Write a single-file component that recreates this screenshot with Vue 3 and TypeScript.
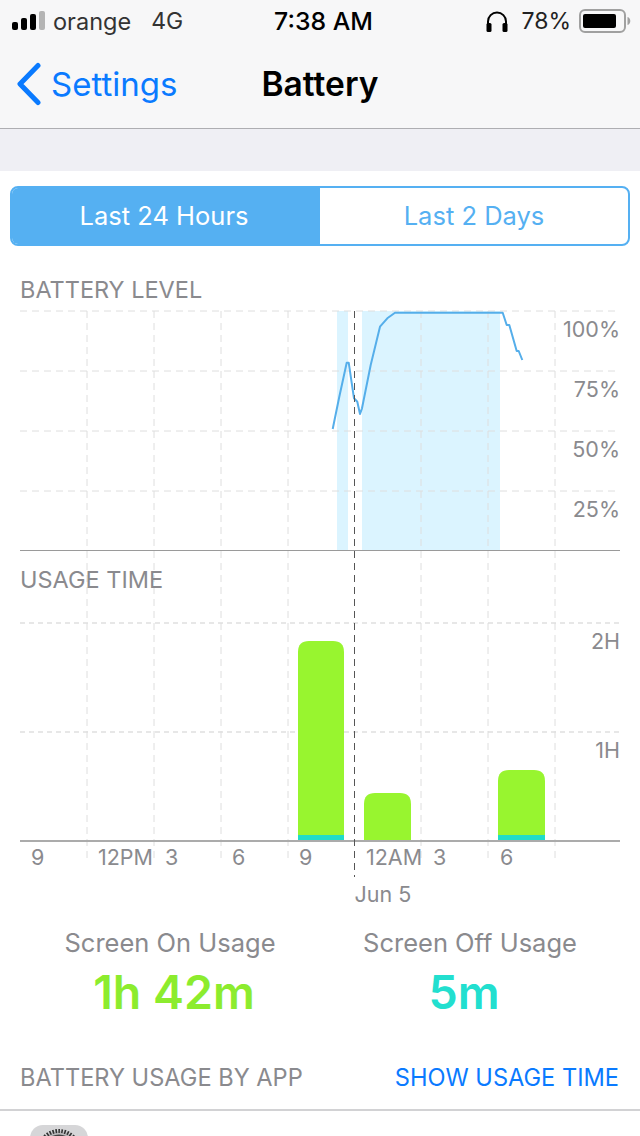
<script setup lang="ts">
const hLines = [311, 371, 431, 491]
const hLinesUsage = [623, 732]
const vLines = [87, 154, 221, 288, 421, 488, 555]

const levelLabels = [
  { text: '100%', y: 337 },
  { text: '75%', y: 397 },
  { text: '50%', y: 457 },
  { text: '25%', y: 517 },
]

const hourLabels = [
  { text: '2H', y: 649 },
  { text: '1H', y: 758 },
]

const xLabels = [
  { text: '9', x: 31 },
  { text: '12PM', x: 98 },
  { text: '3', x: 165 },
  { text: '6', x: 232 },
  { text: '9', x: 299 },
  { text: '12AM', x: 366 },
  { text: '3', x: 433 },
  { text: '6', x: 500 },
]

const charging = [
  { x: 337, width: 11 },
  { x: 362, width: 138 },
]

const levelLine =
  '332.7,429 339.3,396.7 346.7,362.7 348.7,362.7 354,398.3 357.3,401.7 360,414 362,408.3 370.7,365 380,326.7 387.3,318.3 395,312.7 502.7,312.7 506.7,325 509.3,325 516.7,351 518.7,351 522.3,360'

const bars = [
  { x: 298, width: 46, top: 641, teal: 835 },
  { x: 364, width: 47, top: 793, teal: 0 },
  { x: 498, width: 47, top: 770, teal: 835 },
]

function barPath(x: number, w: number, top: number) {
  const r = 11
  return `M${x} 841V${top + r}Q${x} ${top} ${x + r} ${top}H${x + w - r}Q${x + w} ${top} ${x + w} ${top + r}V841Z`
}
</script>

<template>
  <div class="screen">
    <header class="top">
      <div class="status">
        <div class="status-left">
          <svg width="33" height="20" viewBox="0 0 33 20">
            <rect x="0" y="11" width="6" height="8" rx="2" fill="#000" />
            <rect x="9" y="7" width="6" height="12" rx="2" fill="#000" />
            <rect x="18" y="3" width="6" height="16" rx="2" fill="#000" />
            <rect x="27" y="0" width="6" height="19" rx="2" fill="#b4b4b4" />
          </svg>
          <span class="carrier">orange</span>
          <span class="network">4G</span>
        </div>
        <span class="clock">7:38 AM</span>
        <div class="status-right">
          <svg class="phones" width="22" height="21" viewBox="0 0 22 21" fill="none">
            <path d="M2 14V10.500a9 9 0 0 1 18 0V14" stroke="#000" stroke-width="2" />
            <rect x="0.500" y="12" width="5" height="9" rx="1.500" fill="#000" />
            <rect x="16.500" y="12" width="5" height="9" rx="1.500" fill="#000" />
          </svg>
          <span class="percent">78%</span>
          <svg width="53" height="24" viewBox="0 0 53 24">
            <rect x="1" y="1" width="45" height="22" rx="5" fill="none" stroke="#a0a0a0" stroke-width="2" />
            <rect x="4" y="5" width="33" height="14" rx="2" fill="#000" />
            <path d="M48.500 8c1.800.5 2.800 2.100 2.800 4s-1 3.500-2.800 4z" fill="#a0a0a0" />
          </svg>
        </div>
      </div>
      <nav class="nav">
        <div class="back">
          <svg width="26" height="44" viewBox="0 0 26 44" fill="none">
            <path d="M22 3.500 4 22l18 18.500" stroke="#0a7aff" stroke-width="5" stroke-linecap="round" stroke-linejoin="round" />
          </svg>
          <span>Settings</span>
        </div>
        <h1 class="title">Battery</h1>
      </nav>
    </header>

    <div class="band"></div>

    <main class="content">
      <div class="segment">
        <div class="seg active">Last 24 Hours</div>
        <div class="seg">Last 2 Days</div>
      </div>

      <svg class="chart" width="640" height="640" viewBox="0 270 640 640">
        <rect v-for="c in charging" :key="c.x" :x="c.x" y="311" :width="c.width" height="239" fill="#dbf4ff" />

        <line v-for="y in hLines" :key="y" x1="20" x2="620" :y1="y" :y2="y" class="grid" />
        <line v-for="y in hLinesUsage" :key="y" x1="20" x2="620" :y1="y" :y2="y" class="grid usage-grid" />
        <line v-for="x in vLines" :key="x" :x1="x" :x2="x" y1="311" y2="858" class="grid" />

        <polyline :points="levelLine" fill="none" stroke="#55aeea" stroke-width="2" stroke-linejoin="round" />

        <g v-for="b in bars" :key="b.x">
          <path :d="barPath(b.x, b.width, b.top)" fill="#98f52f" />
          <rect v-if="b.teal" :x="b.x" :y="b.teal" :width="b.width" :height="841 - b.teal" fill="#1fdcc8" />
        </g>

        <line x1="20" x2="620" y1="550.500" y2="550.500" class="axis" />
        <line x1="20" x2="620" y1="841" y2="841" class="axis thick" />
        <line x1="354.500" x2="354.500" y1="311" y2="877" class="now" />

        <text x="20" y="298" class="label heading">BATTERY LEVEL</text>
        <text x="20" y="588" class="label heading">USAGE TIME</text>
        <text v-for="l in levelLabels" :key="l.text" x="620" :y="l.y" text-anchor="end" class="label">{{ l.text }}</text>
        <text v-for="l in hourLabels" :key="l.text" x="620" :y="l.y" text-anchor="end" class="label">{{ l.text }}</text>
        <text v-for="l in xLabels" :key="l.text + l.x" :x="l.x" y="865" class="label">{{ l.text }}</text>
        <text x="354.500" y="902" class="label">Jun 5</text>
      </svg>

      <section class="usage">
        <div class="usage-col on">
          <div class="usage-name">Screen On Usage</div>
          <div class="usage-value">1h 42m</div>
        </div>
        <div class="usage-col off">
          <div class="usage-name">Screen Off Usage</div>
          <div class="usage-value">5m</div>
        </div>
      </section>

      <div class="by-app">
        <span class="by-app-title">BATTERY USAGE BY APP</span>
        <span class="by-app-link">SHOW USAGE TIME</span>
      </div>

      <div class="app-row">
        <svg class="app-icon" width="58" height="58" viewBox="0 0 58 58">
          <rect width="58" height="58" rx="13" fill="#d6d6d8" />
          <circle cx="29" cy="26" r="20" fill="#b8b8ba" stroke="#333" stroke-width="4" stroke-dasharray="1.600 1.400" />
          <circle cx="29" cy="26" r="15" fill="none" stroke="#444" stroke-width="3" />
        </svg>
      </div>
    </main>
  </div>
</template>

<style scoped>
.screen {
  width: 640px;
  height: 1136px;
  overflow: hidden;
  background: #fff;
  font-family: Inter, "Liberation Sans", sans-serif;
  color: #000;
}

.top {
  height: 128px;
  background: #f7f7f8;
  border-bottom: 1px solid #aeaeb2;
}

.status {
  height: 42px;
  padding: 0 8px 0 12px;
  display: grid;
  grid-template-columns: 1fr auto 1fr;
  align-items: center;
  font-size: 23px;
}

.status-left {
  display: flex;
  align-items: center;
  gap: 8px;
  color: #333;
}

.carrier {
  font-size: 23.500px;
}

.network {
  margin-left: 12px;
}

.clock {
  font-size: 24.800px;
  font-weight: 500;
  margin-left: 3px;
}

.status-right {
  display: flex;
  align-items: center;
  justify-content: flex-end;
  gap: 8px;
  color: #222;
}

.phones {
  margin-right: 5px;
}

.nav {
  height: 86px;
  position: relative;
  display: flex;
  align-items: center;
  justify-content: center;
  padding-bottom: 2px;
  box-sizing: border-box;
}

.back {
  position: absolute;
  left: 16px;
  top: 20px;
  display: flex;
  align-items: center;
  gap: 9px;
  color: #0a7aff;
  font-size: 33px;
}

.title {
  margin: 0;
  font-size: 33.500px;
  font-weight: 600;
}

.band {
  height: 42px;
  background: #efeff4;
}

.content {
  padding-top: 15px;
}

.segment {
  margin: 0 10px;
  height: 60px;
  box-sizing: border-box;
  border: 2px solid #55b0f2;
  border-radius: 8px;
  display: flex;
  overflow: hidden;
  margin-bottom: 24px;
}

.seg {
  width: 50%;
  box-sizing: border-box;
  padding-bottom: 2px;
  display: flex;
  align-items: center;
  justify-content: center;
  font-size: 25.500px;
  color: #55b0f2;
}

.seg.active {
  background: #55b0f2;
  color: #fff;
  padding-right: 4px;
}

.chart {
  display: block;
}

.grid {
  stroke: #dedede;
  stroke-width: 1;
  stroke-dasharray: 7 5;
}

.usage-grid {
  stroke: #cfcfcf;
  stroke-dasharray: 5 4;
}

.axis {
  stroke: #9a9a9a;
  stroke-width: 1;
}

.axis.thick {
  stroke-width: 2;
  stroke: #ababab;
}

.now {
  stroke: #555;
  stroke-width: 1;
  stroke-dasharray: 7 5;
}

.label {
  font-family: Inter, "Liberation Sans", sans-serif;
  font-size: 21.500px;
  fill: #8a8a8e;
}

.heading {
  font-size: 23.500px;
}

.usage {
  margin-top: 17px;
  display: flex;
}

.usage-col {
  text-align: center;
}

.usage-col.on {
  width: 340px;
}

.usage-col.off {
  width: 260px;
}

.usage-name {
  font-size: 25.500px;
  color: #8a8a8e;
}

.usage-value {
  font-size: 46.500px;
  font-weight: 600;
  line-height: 56px;
  margin-top: 6px;
}

.on .usage-value {
  color: #8cec2e;
  padding-left: 8px;
}

.off .usage-value {
  color: #22dfcf;
  padding-right: 12px;
}

.by-app {
  margin-top: 43px;
  padding: 0 21px 17px 20px;
  display: flex;
  justify-content: space-between;
  font-size: 23.600px;
  border-bottom: 2px solid #d2d2d4;
}

.by-app-title {
  color: #8a8a8e;
}

.by-app-link {
  color: #0a7aff;
}

.app-row {
  padding: 14px 0 0 30px;
}

.app-icon {
  display: block;
}
</style>

<style>
html,
body {
  background: #fff;
}
</style>
